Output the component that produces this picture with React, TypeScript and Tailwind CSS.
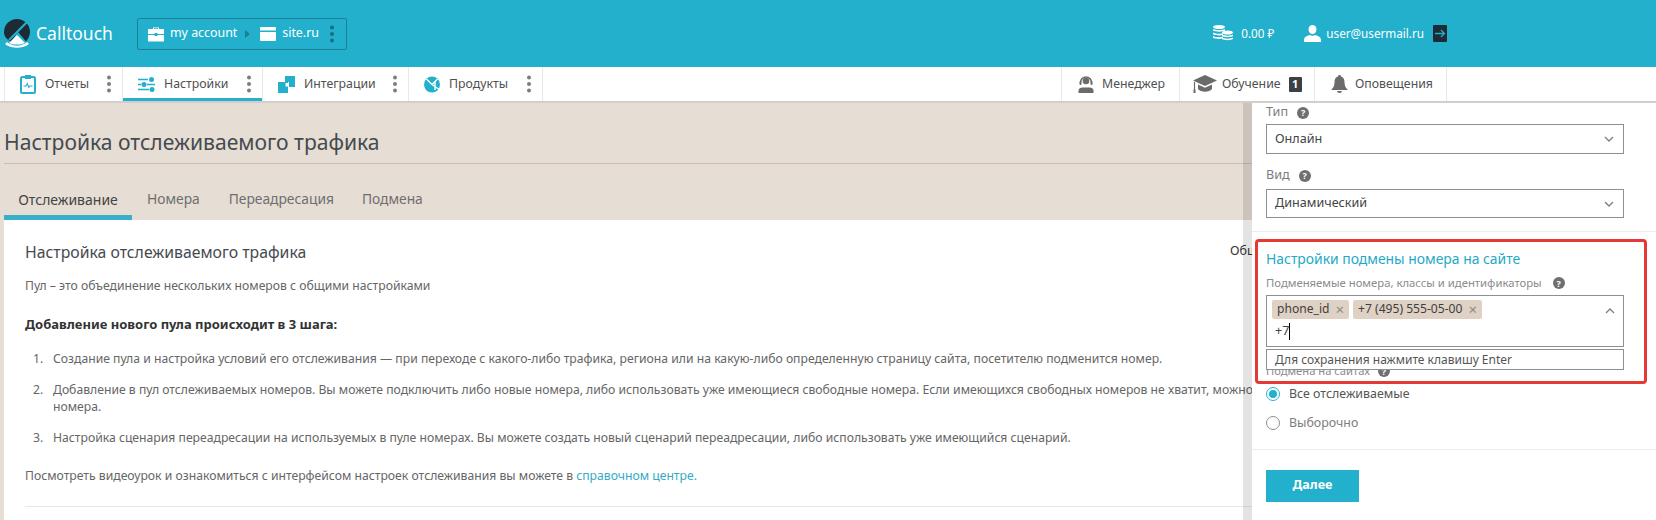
import React from "react";

const teal = "#23b0cc";

function Dots({ color = "#7d7d7d" }: { color?: string }) {
  return (
    <svg width="6" height="18" viewBox="0 0 6 18" className="shrink-0">
      <circle cx="3" cy="2.500" r="2" fill={color} />
      <circle cx="3" cy="9" r="2" fill={color} />
      <circle cx="3" cy="15.500" r="2" fill={color} />
    </svg>
  );
}

function Logo() {
  return (
    <svg width="26" height="29" viewBox="0 0 26 29" className="shrink-0">
      <path d="M13 0a13 13 0 0 1 13 13c0 4-2 7-4 9.500L14 13 7 22.500 C2 20 0 17 0 13A13 13 0 0 1 13 0z" fill="#1d2b36" />
      <path d="M26 0 L5 21" stroke="#23b0cc" strokeWidth="2" />
      <path d="M13 16l8 8c-5 2-11 2-16 0z" fill="#fff" />
      <path d="M3 23c6 5 14 5 20 0l2 2c-6 5-18 5-24 0z" fill="#fff" />
    </svg>
  );
}

function Briefcase() {
  return (
    <svg width="16" height="16" viewBox="0 0 16 16" className="shrink-0">
      <path d="M5 3V1.500h6V3h4.500a.5.5 0 0 1 .5.5V8H9.500V7h-3v1H0V3.500A.5.5 0 0 1 .5 3zm1 0h4v-.7H6z" fill="#fff" fillRule="evenodd" />
      <path d="M0 9h6.500v1h3V9H16v6a.5.5 0 0 1-.5.5H.5A.5.5 0 0 1 0 15z" fill="#fff" />
    </svg>
  );
}

function Browser() {
  return (
    <svg width="16" height="14" viewBox="0 0 16 14" className="shrink-0">
      <path d="M1 0h14a1 1 0 0 1 1 1v2.500H0V1a1 1 0 0 1 1-1zM0 5h16v8a1 1 0 0 1-1 1H1a1 1 0 0 1-1-1z" fill="#fff" />
    </svg>
  );
}

function Help() {
  return (
    <span className="flex h-[12px] w-[12px] shrink-0 items-center justify-center rounded-full bg-[#6f6f6f] text-[9px] font-bold leading-none text-white">?</span>
  );
}

function Chevron({ up = false }: { up?: boolean }) {
  return (
    <svg width="10" height="6" viewBox="0 0 10 6" className="shrink-0">
      <path d={up ? "M1 5l4-4 4 4" : "M1 1l4 4 4-4"} fill="none" stroke="#7d7d7d" strokeWidth="1.300" />
    </svg>
  );
}

function NavReport() {
  return (
    <svg width="16" height="20" viewBox="0 0 16 20" fill="none" className="shrink-0">
      <rect x="1" y="3" width="14" height="16" rx="1.500" stroke={teal} strokeWidth="2" />
      <rect x="5" y="1" width="6" height="4" fill={teal} />
      <path d="M3.500 12h2.500l1.300-2.500 1.500 4 1.200-1.500h2.500" stroke={teal} strokeWidth="1.100" />
    </svg>
  );
}
function NavSettings() {
  return (
    <svg width="17" height="15" viewBox="0 0 17 15" className="shrink-0">
      <path d="M0 2.500h10M0 7.500h3M9 7.500h8M0 12.500h11" stroke={teal} strokeWidth="1.400" />
      <circle cx="13.500" cy="2.500" r="2.500" fill={teal} />
      <circle cx="6" cy="7.500" r="2.500" fill={teal} />
      <circle cx="14" cy="12.500" r="2.500" fill={teal} />
    </svg>
  );
}
function NavIntegr() {
  return (
    <svg width="17" height="17" viewBox="0 0 17 17" className="shrink-0">
      <path d="M7 0h10v11h-6V6H7z" fill={teal} />
      <path d="M0 6h10v11H0z" fill={teal} />
      <path d="M7.500 7h2.500v3.500H7.500z" fill="#fff" />
    </svg>
  );
}
function NavProducts() {
  return (
    <svg width="16" height="17" viewBox="0 0 16 17" className="shrink-0">
      <circle cx="8" cy="8.500" r="8" fill={teal} />
      <path d="M8 8.500L2.500 3M8 8.500L13.500 3" stroke="#fff" strokeWidth="1.400" />
      <path d="M8 8.500L16 14M11 6v8" stroke="#fff" strokeWidth="1.400" />
    </svg>
  );
}
function Manager() {
  return (
    <svg width="18" height="18" viewBox="0 0 18 18" fill="none" className="shrink-0">
      <circle cx="9" cy="6" r="3.300" fill="#6b6b6b" />
      <path d="M3.500 7.500a5.500 5.500 0 0 1 11 0" stroke="#6b6b6b" strokeWidth="1.500" />
      <rect x="2.500" y="6" width="2" height="4" rx="1" fill="#6b6b6b" />
      <rect x="13.500" y="6" width="2" height="4" rx="1" fill="#6b6b6b" />
      <path d="M1.500 18v-2.500c0-2 2-3 4-3h7c2 0 4 1 4 3V18z" fill="#6b6b6b" />
    </svg>
  );
}
function Hat() {
  return (
    <svg width="24" height="18" viewBox="0 0 24 18" className="shrink-0">
      <path d="M12 0l12 5.500L12 11 0 5.500z" fill="#6b6b6b" />
      <path d="M5 9.500l7 3.200 7-3.200V14c-3 3.500-11 3.500-14 0z" fill="#6b6b6b" />
      <path d="M1.500 7v8" stroke="#6b6b6b" strokeWidth="1.200" />
      <rect x="0.500" y="14.500" width="2" height="3.500" fill="#6b6b6b" />
    </svg>
  );
}
function Bell() {
  return (
    <svg width="19" height="18" viewBox="0 0 19 18" className="shrink-0">
      <path d="M9.500 0c1 0 1.500.7 1.500 1.500 2.500.7 3.500 3 3.500 5.500 0 4 1 5.500 3 7.500v.5h-16v-.5c2-2 3-3.500 3-7.500 0-2.500 1-4.800 3.500-5.500C8 .7 8.500 0 9.500 0z" fill="#6b6b6b" />
      <path d="M7 16h5a2.500 2 0 0 1-5 0z" fill="#6b6b6b" />
    </svg>
  );
}
function Coins() {
  return (
    <svg width="20" height="17" viewBox="0 0 20 17" fill="#fff" className="shrink-0">
      <ellipse cx="6" cy="2" rx="6" ry="2" />
      <path d="M0 4c2 1.500 10 1.500 12 0v1.500C10 7 2 7 0 5.500zM0 7.500c2 1.500 8 1.500 10 .8V10c-3 .7-8 .5-10-.8zM0 11c2 1.300 7 1.500 10 .8v1.700c-3 .7-8 .5-10-.8z" />
      <ellipse cx="14.500" cy="7.500" rx="5.500" ry="2" />
      <path d="M9 9.500c2 1.500 9 1.500 11 0V11c-2 1.500-9 1.500-11 0zM9 12.500c2 1.500 9 1.500 11 0V14c-2 1.500-9 1.500-11 0z" />
    </svg>
  );
}
function User() {
  return (
    <svg width="17" height="17" viewBox="0 0 17 17" fill="#fff" className="shrink-0">
      <ellipse cx="8.500" cy="4.500" rx="4" ry="4.500" />
      <path d="M0 17v-2c0-3 3-4 5.500-5 1.800 1 4.200 1 6 0 2.500 1 5.500 2 5.500 5v2z" />
    </svg>
  );
}
function Logout() {
  return (
    <span className="flex h-[17px] w-[14px] items-center justify-center rounded-[1px] bg-[#1d2b36]">
      <svg width="11" height="9" viewBox="0 0 11 9" fill="none">
        <path d="M0 4.500h9.500M6 1l3.500 3.500L6 8" stroke={teal} strokeWidth="1.300" />
      </svg>
    </span>
  );
}

function NavTab({ icon, label, active, w }: { icon: React.ReactNode; label: string; active?: boolean; w: string }) {
  return (
    <div className={`relative flex h-full items-center border-r border-[#e9e9e9] ${w}`}>
      <div className="flex w-full items-center justify-between pl-[15px] pr-[10px]">
        <div className="flex items-center gap-[9px]">
          {icon}
          <span>{label}</span>
        </div>
        <Dots />
      </div>
      {active && <div className="absolute inset-x-0 bottom-0 h-[3px] bg-[#23b0cc]" />}
    </div>
  );
}

function Tag({ text }: { text: string }) {
  return (
    <span className="flex h-[19px] items-center gap-[6px] rounded-[2px] bg-[#dfd2c5] px-[5px] text-[12.100px] text-[#3e3e3e]">
      {text}
      <span className="text-[15px] leading-none text-[#8a8a8a]">×</span>
    </span>
  );
}

export default function App() {
  return (
    <div className="relative flex h-[520px] w-[1656px] flex-col overflow-hidden bg-[#e6ddd4] font-['Noto_Sans','Open_Sans',sans-serif] text-[#555]">
      {/* top bar */}
      <header className="flex h-[67px] shrink-0 items-center bg-[#23b0cc] text-white">
        <div className="ml-[4px] flex w-[133px] items-center gap-[6px]">
          <Logo />
          <span className="text-[17.500px] leading-none">Calltouch</span>
        </div>
        <div className="flex h-[32px] w-[210px] items-center rounded-[2px] border border-[#1c7f92] pl-[10px] pr-[11px] text-[12.400px]">
          <Briefcase />
          <span className="ml-[6px]">my account</span>
          <span className="ml-[8px] h-0 w-0 border-y-[4px] border-l-[5px] border-y-transparent border-l-[#1c7f92]" />
          <span className="ml-[10px]"><Browser /></span>
          <span className="ml-[6px]">site.ru</span>
          <span className="ml-auto"><Dots color="#1a6d80" /></span>
        </div>
        <div className="ml-auto flex items-center text-[11.700px]">
          <Coins />
          <span className="ml-[8px]">0.00 ₽</span>
          <span className="ml-[30px]"><User /></span>
          <span className="ml-[5px]">user@usermail.ru</span>
          <span className="ml-[9px] mr-[209px]"><Logout /></span>
        </div>
      </header>

      {/* nav */}
      <nav className="relative z-10 flex h-[34px] shrink-0 items-stretch bg-white text-[12.300px] text-[#505050] shadow-[0_2px_0_#d3cec8]">
        <div className="flex pl-[4px]">
          <div className="flex border-l border-[#e9e9e9]">
            <NavTab w="w-[118px]" icon={<NavReport />} label="Отчеты" />
            <NavTab w="w-[140px]" icon={<NavSettings />} label="Настройки" active />
            <NavTab w="w-[146px]" icon={<NavIntegr />} label="Интеграции" />
            <NavTab w="w-[134px]" icon={<NavProducts />} label="Продукты" />
          </div>
        </div>
        <div className="ml-[518px] flex border-l border-[#e9e9e9]">
          <div className="flex w-[118px] items-center gap-[7px] border-r border-[#e9e9e9] pl-[15px]"><Manager />Менеджер</div>
          <div className="flex w-[135px] items-center gap-[5px] border-r border-[#e9e9e9] pl-[13px]">
            <Hat />Обучение
            <span className="ml-[3px] flex h-[15px] w-[13px] items-center justify-center rounded-[1px] bg-[#3c4146] text-[11px] font-bold text-white">1</span>
          </div>
          <div className="flex w-[132px] items-center gap-[6px] border-r border-[#e9e9e9] pl-[15px]"><Bell />Оповещения</div>
        </div>
      </nav>

      {/* page */}
      <main className="min-h-0 flex-1 pl-[4px]">
        <h1 className="flex h-[63px] items-end border-b border-[#c9bfb3] pb-[4px] text-[21.100px] leading-[34px] text-[#454a4f]">Настройка отслеживаемого трафика</h1>
        <div className="flex h-[56px] items-end text-[13.800px] text-[#6e6e6e]">
          <div className="flex h-[42px] w-[128px] items-center justify-center border-b-[5px] border-[#3aafca] pt-[6px] text-[14px] text-[#444]">Отслеживание</div>
          <span className="ml-[15px] flex h-[42px] items-center pb-[5px] pt-[6px]">Номера</span>
          <span className="ml-[29px] flex h-[42px] items-center pb-[5px] pt-[6px]">Переадресация</span>
          <span className="ml-[28px] flex h-[42px] items-center pb-[5px] pt-[6px]">Подмена</span>
        </div>
        <section className="h-[300px] overflow-hidden bg-white pl-[21px] pt-[20px] text-[12.200px] text-[#666]">
          <div className="relative">
            <h2 className="text-[15.800px] leading-[24px] text-[#454a4f]">Настройка отслеживаемого трафика</h2>
            <span className="absolute left-[1205px] top-[2px] text-[12.500px] text-[#333]">Общие настройки</span>
          </div>
          <p className="mt-[12px] leading-[20px]">Пул – это объединение нескольких номеров с общими настройками</p>
          <p className="mt-[18px] text-[13px] font-bold leading-[20px] text-[#333]">Добавление нового пула происходит в 3 шага:</p>
          <ol className="mt-[16px] w-[1370px] space-y-[14px]">
            <li className="flex leading-[17px]"><span className="w-[28px] pl-[8px]">1.</span><span className="flex-1">Создание пула и настройка условий его отслеживания — при переходе с какого-либо трафика, региона или на какую-либо определенную страницу сайта, посетителю подменится номер.</span></li>
            <li className="flex leading-[17px]"><span className="w-[28px] pl-[8px]">2.</span><span className="flex-1">Добавление в пул отслеживаемых номеров. Вы можете подключить либо новые номера, либо использовать уже имеющиеся свободные номера. Если имеющихся свободных номеров не хватит, можно подключить новые номера.</span></li>
            <li className="flex leading-[17px]"><span className="w-[28px] pl-[8px]">3.</span><span className="flex-1">Настройка сценария переадресации на используемых в пуле номерах. Вы можете создать новый сценарий переадресации, либо использовать уже имеющийся сценарий.</span></li>
          </ol>
          <p className="mt-[20px] leading-[20px]">Посмотреть видеоурок и ознакомиться с интерфейсом настроек отслеживания вы можете в <span className="text-[#36a9c6]">справочном центре.</span></p>
          <div className="mt-[20px] h-px bg-[#e8e8e8]" />
        </section>
      </main>

      {/* side panel over the page */}
      <aside className="absolute bottom-0 right-0 top-[103px] w-[404px] bg-white text-[12.600px] shadow-[-9px_0_0_rgba(0,0,0,0.11)]">
        <div className="h-[129px] border-b border-[#ececec] px-[14px]">
          <div className="flex h-[21px] items-center gap-[9px] pb-[2px] text-[#7d7d7d]">Тип <Help /></div>
          <div className="flex h-[30px] w-[358px] items-center justify-between border border-[#8f8f8f] pl-[8px] pr-[9px] text-[#444]">Онлайн <Chevron /></div>
          <div className="mt-[11px] flex h-[24px] items-center gap-[9px] pb-[3px] text-[#7d7d7d]">Вид <Help /></div>
          <div className="flex h-[29px] w-[358px] items-center justify-between border border-[#8f8f8f] pl-[8px] pr-[9px] text-[#444]">Динамический <Chevron /></div>
        </div>
        <div className="relative px-[14px]">
          <div className="pointer-events-none absolute left-[3px] top-[7px] z-20 h-[145px] w-[392px] rounded-[4px] border-[3px] border-[#e53935]" />
          <p className="pt-[18px] text-[13.900px] leading-[18px] text-[#23a9c6]">Настройки подмены номера на сайте</p>
          <div className="mt-[6px] flex h-[18px] items-center gap-[11px] text-[11.300px] text-[#8b8b8b]">Подменяемые номера, классы и идентификаторы <Help /></div>
          <div className="relative mt-[3px] h-[52px] w-[358px] border border-[#8f8f8f] pl-[5px] pt-[4px]">
            <div className="flex gap-[4px]"><Tag text="phone_id" /><Tag text="+7 (495) 555-05-00" /></div>
            <div className="mt-[3px] flex h-[18px] items-center pl-[3px] text-[12.600px] text-[#444]">+7<span className="h-[17px] w-px bg-black" /></div>
            <span className="absolute right-[8px] top-[12px]"><Chevron up /></span>
          </div>
          <div className="relative z-10 mt-[2px] flex h-[21px] w-[358px] items-center border border-[#8f8f8f] bg-white pl-[8px] text-[12px] text-[#555]">Для сохранения нажмите клавишу Enter</div>
          <div className="-mt-[8px] flex h-[18px] items-center gap-[8px] text-[11.200px] text-[#8b8b8b]">Подмена на сайтах <Help /></div>
          <div className="mt-[5px] flex h-[18px] items-center gap-[9px] text-[12.400px] text-[#555]">
            <span className="flex h-[14px] w-[14px] items-center justify-center rounded-full border-[1.500px] border-[#23b0cc]"><span className="h-[8px] w-[8px] rounded-full bg-[#23b0cc]" /></span>
            Все отслеживаемые
          </div>
          <div className="mt-[11px] flex h-[18px] items-center gap-[9px] text-[12.400px] text-[#7d7d7d]">
            <span className="h-[14px] w-[14px] rounded-full border border-[#8f8f8f]" />
            Выборочно
          </div>
        </div>
        <div className="mt-[17px] border-t border-[#ececec] px-[14px] pt-[20px]">
          <button className="h-[32px] w-[93px] bg-[#23b0cc] pb-[2px] text-[12.600px] font-bold text-white">Далее</button>
        </div>
      </aside>
    </div>
  );
}
